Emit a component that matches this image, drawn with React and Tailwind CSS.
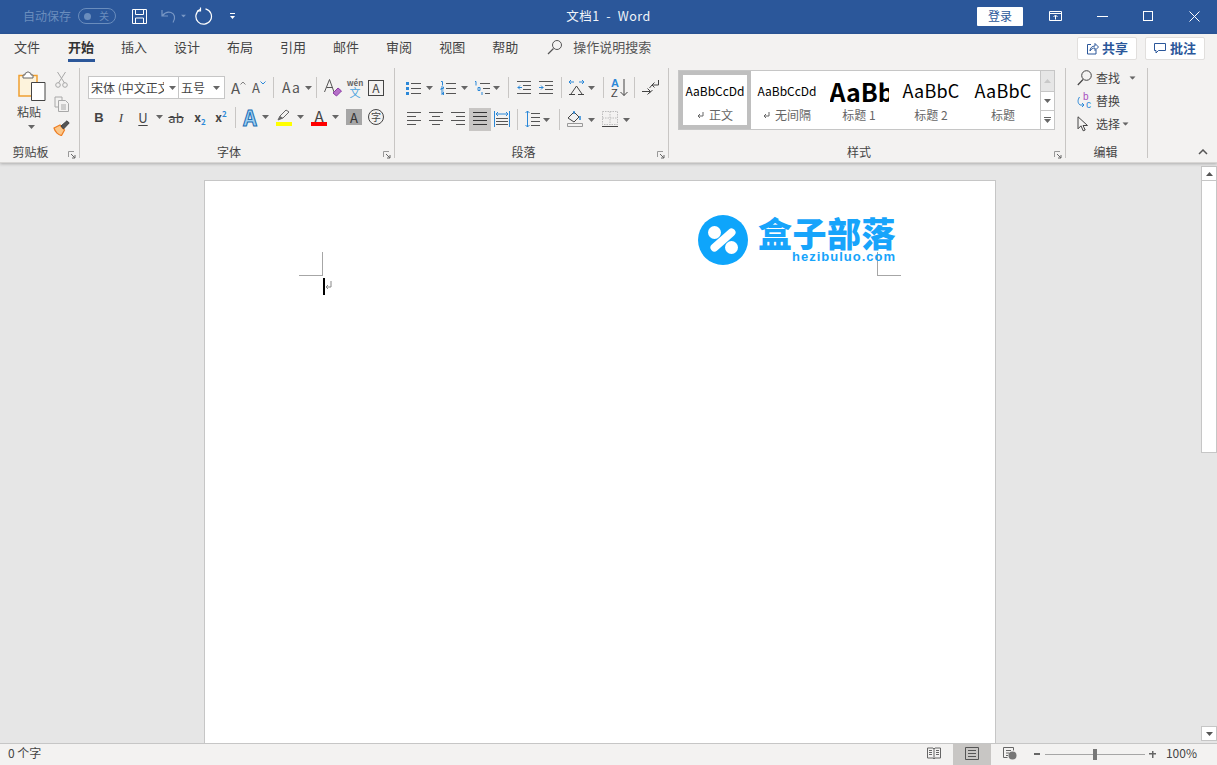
import React from "react";

const BLUE = "#2b88d8";
const DK = "#555";

const Caret = ({ className = "", color = "#666" }) => (
  <svg width="7" height="4" viewBox="0 0 7 4" className={`shrink-0 ${className}`}>
    <path d="M0 0h7L3.5 4z" fill={color} />
  </svg>
);

const VSep = ({ className = "" }) => <div className={`w-px shrink-0 bg-[#c8c6c4] ${className}`} />;

const Launcher = () => (
  <svg width="8" height="8" viewBox="0 0 8 8" className="absolute right-[3px] top-[8px]">
    <path d="M0.5 6V0.5H6" fill="none" stroke="#999" />
    <path d="M3 3l4 4M7 4v3H4" fill="none" stroke="#666" />
  </svg>
);

const Group = ({ label, width, labelPad = "pr-[16px]", children }) => (
  <div className={`${width} h-[90px] shrink-0 flex flex-col border-r border-[#c8c6c4]`}>
    <div className="flex-1 min-h-0">{children}</div>
    <div className={`relative h-[18px] flex items-center justify-center text-[12px] leading-[16px] text-[#444] -mb-[3px] ${labelPad}`}>
      {label}
      {label !== "编辑" && <Launcher />}
    </div>
  </div>
);

const Lines = ({ rows, w = 15, h = 14, color = DK, children, className = "" }) => (
  <svg width={w} height={h} viewBox={`0 0 ${w} ${h}`} className={`shrink-0 ${className}`}>
    {rows.map(([a, b, y], i) => (
      <path key={i} d={`M${a} ${y + 0.5}H${b}`} stroke={color} fill="none" />
    ))}
    {children}
  </svg>
);

const Tab = ({ children, active, className = "" }) => (
  <div className={`relative h-[28px] pb-[2px] flex items-center text-[13px] ${active ? "font-bold text-[#333]" : "text-[#444]"} ${className}`}>
    {children}
    {active && <div className="absolute left-0 right-[-1px] bottom-0 h-[3px] bg-[#2b579a]" />}
  </div>
);

const TitleBar = () => (
  <div className="h-[34px] shrink-0 bg-[#2b579a] grid grid-cols-[1fr_auto_1fr] items-center pb-[2px] text-white">
    <div className="flex items-center pl-[23px]">
      <span className="text-[12px] text-[#6a8dbd]">自动保存</span>
      <div className="ml-[7px] w-[38px] h-[16px] rounded-full border border-[#6a8dbd] flex items-center justify-between pl-[5px] pr-[6px]">
        <div className="w-[7px] h-[7px] rounded-full bg-[#6a8dbd]" />
        <span className="text-[10px] leading-none text-[#6a8dbd]">关</span>
      </div>
      <svg width="17" height="17" viewBox="0 0 17 17" className="ml-[15px]">
        <path d="M1.5 1.5h14v14h-14zM4.5 1.5v5h8v-5M4.5 15.5v-5.5h8v5.5" fill="none" stroke="#fff" />
      </svg>
      <svg width="16" height="16" viewBox="0 0 16 16" className="ml-[13px]">
        <path d="M1 2v6h6M1.500 7.500C4 4.500 7 3.500 10 4.500c3.500 1.200 5 5.500 2 10" fill="none" stroke="#7796c4" strokeWidth="1.2" />
      </svg>
      <Caret color="#7796c4" className="ml-[3px] scale-75" />
      <svg width="18" height="18" viewBox="0 0 18 18" className="ml-[8px]">
        <path d="M5 2.500A7.800 7.800 0 1 0 10.500 1.800" fill="none" stroke="#fff" strokeWidth="1.2" />
        <path d="M5.500 0.500v3.500H2" fill="none" stroke="#fff" strokeWidth="1.2" />
      </svg>
      <svg width="5" height="7" viewBox="0 0 5 7" className="ml-[17px]">
        <path d="M0 0.500h5" stroke="#fff" />
        <path d="M0 3h5L2.500 6z" fill="#fff" />
      </svg>
    </div>
    <div className="text-[12.5px] tracking-[0.5px] text-[#f1f4f9]">文档1&nbsp; -&nbsp; Word</div>
    <div className="flex items-center justify-end">
      <button className="w-[46px] h-[19px] bg-white rounded-[1px] text-[12px] leading-none text-[#2b579a]">登录</button>
      <svg width="13" height="10" viewBox="0 0 13 10" className="ml-[26px]">
        <path d="M.5.500h12v9H.5zM.5 2.500h12M6.500 8.500V4.500M4.500 6l2-2 2 2" fill="none" stroke="#fff" />
      </svg>
      <div className="ml-[35px] w-[11px] h-px bg-white" />
      <div className="ml-[35px] w-[10px] h-[10px] border border-white" />
      <svg width="11" height="11" viewBox="0 0 11 11" className="ml-[36px] mr-[17px]">
        <path d="M.5.500l10 10M10.500.500l-10 10" stroke="#fff" />
      </svg>
    </div>
  </div>
);

const TabRow = () => (
  <div className="h-[28px] shrink-0 flex items-center pl-[14px]">
    <div className="flex items-center gap-[27px]">
      <Tab className="mr-px">文件</Tab>
      <Tab active>开始</Tab>
      <Tab>插入</Tab>
      <Tab>设计</Tab>
      <Tab>布局</Tab>
      <Tab>引用</Tab>
      <Tab>邮件</Tab>
      <Tab>审阅</Tab>
      <Tab>视图</Tab>
      <Tab>帮助</Tab>
    </div>
    <svg width="16" height="16" viewBox="0 0 16 16" className="ml-[29px] -mt-[2px]">
      <circle cx="10" cy="6" r="4.500" fill="none" stroke="#555" />
      <path d="M6.500 9.500L1 15" stroke="#555" strokeWidth="1.200" />
    </svg>
    <span className="ml-[10px] pb-[2px] text-[13px] text-[#555]">操作说明搜索</span>
    <div className="ml-auto mr-[12px] flex gap-[8px] pt-px">
      <button className="w-[60px] h-[23px] pb-px bg-white border border-[#e1dfdd] rounded-[2px] flex items-center justify-center gap-[3px] text-[13px] font-bold text-[#2b579a]">
        <svg width="13" height="13" viewBox="0 0 13 13">
          <path d="M5 2.500H1.500v9.500h8.500V8M4 9c0-3 2-5 5-5V1.500L12.500 5 9 8.500V6C7 6 5 7 4 9z" fill="none" stroke="#2b579a" />
        </svg>
        共享
      </button>
      <button className="w-[60px] h-[23px] pb-px bg-white border border-[#e1dfdd] rounded-[2px] flex items-center justify-center gap-[4px] text-[13px] font-bold text-[#2b579a]">
        <svg width="12" height="12" viewBox="0 0 12 12">
          <path d="M.5 1.500h11v7H4.500L2 11V8.500H.5z" fill="none" stroke="#2b579a" />
        </svg>
        批注
      </button>
    </div>
  </div>
);

const Clipboard = () => (
  <Group label="剪贴板" width="w-[80px]" labelPad="pr-[18px]">
    <div className="flex pl-[16px] pt-[3px]">
      <div className="flex flex-col items-center w-[30px]">
        <svg width="29" height="30" viewBox="0 0 29 30">
          <path d="M2 4.500h18V25H2z" fill="#fdf3dc" stroke="#f0a030" strokeWidth="1.500" />
          <path d="M8 4V2.500L11 .8l3 1.700V4h2v3H6V4z" fill="#fff" stroke="#666" />
          <path d="M14.500 11.500h13.500v18H14.500z" fill="#fff" stroke="#444" />
        </svg>
        <span className="text-[12px] leading-[18px] mt-[2px] pr-[4px] text-[#444]">粘贴</span>
        <Caret className="mt-[4px]" />
      </div>
      <div className="flex flex-col items-center ml-[7px] gap-[8px] w-[17px]">
        <svg width="13" height="17" viewBox="0 0 13 17">
          <path d="M2.500 1l7 11M10.500 1l-7 11" stroke="#a8a8a8" fill="none" />
          <circle cx="3" cy="14" r="2.300" fill="none" stroke="#a8a8a8" />
          <circle cx="10" cy="14" r="2.300" fill="none" stroke="#a8a8a8" />
        </svg>
        <svg width="16" height="16" viewBox="0 0 16 16">
          <path d="M1 1h7v3M1 1v10h3" fill="none" stroke="#a8a8a8" />
          <path d="M4.500 4.500h7l3 3v8h-10z" fill="#f3f2f1" stroke="#a8a8a8" />
          <path d="M7 9h5M7 11h5M7 13h5" stroke="#a8a8a8" />
        </svg>
        <svg width="17" height="16" viewBox="0 0 17 16">
          <path d="M1 8l6-3 4.500 5-3 5.500C5.500 15 2 12 1 8z" fill="#fbc78a" stroke="#ed7d22" strokeWidth="1.200" />
          <path d="M8 6l6-5.200 2.200 2.200L10.500 9z" fill="#555" stroke="#444" />
        </svg>
      </div>
    </div>
  </Group>
);

const Select = ({ text, className, textClass = "flex-1", caretClass }) => (
  <div className={`h-[23px] bg-white border border-[#c6c6c6] flex items-center pl-[2px] text-[12px] text-[#444] overflow-hidden ${className}`}>
    <span className={`whitespace-nowrap overflow-hidden ${textClass}`}>{text}</span>
    <Caret className={caretClass} />
  </div>
);

const GrowA = ({ down, size }) => (
  <div className="flex w-[15px] h-[20px] items-center text-[#555]">
    <span className={`${size} leading-none`}>A</span>
    <svg width="6" height="4" viewBox="0 0 6 4" className="-mt-[9px]">
      <path d={down ? "M.5.500L3 3 5.500.500" : "M.5 3.500L3 1l2.500 2.500"} fill="none" stroke={down ? BLUE : "#777"} />
    </svg>
  </div>
);

const FontGroup = () => (
  <Group label="字体" width="w-[315px]">
    <div className="pl-[8px] pt-[8px] flex items-center h-[31px]">
      <Select text="宋体 (中文正文)" className="w-[91px]" textClass="w-[73px]" caretClass="ml-[5px]" />
      <Select text="五号" className="w-[47px] -ml-px pr-[4px]" />
      <div className="ml-[6px]"><GrowA size="text-[15px]" /></div>
      <div className="ml-[6px]"><GrowA size="text-[13px]" down /></div>
      <VSep className="h-[21px] ml-[6px]" />
      <span className="ml-[8px] w-[20px] text-[14px] tracking-[1px] text-[#555] whitespace-nowrap">Aa</span>
      <Caret className="ml-[3px]" />
      <VSep className="h-[21px] ml-[4px]" />
      <svg width="18" height="19" viewBox="0 0 18 19" className="ml-[7px]">
        <path d="M0.500 14L5.500 1.500 10 14M2.500 9.500h6" fill="none" stroke="#555" />
        <path d="M9 15l5-5 3.500 3-5 5z" fill="#b570c8" stroke="#8b3aa5" />
      </svg>
      <div className="ml-[4px] w-[18px] h-[20px] flex flex-col items-center leading-none">
        <span className="text-[8px] leading-[9px] text-[#666] font-bold">wén</span>
        <span className="text-[11px] leading-[11px] text-[#4aa3de]">文</span>
      </div>
      <div className="ml-[4px] w-[16px] h-[16px] border border-[#444] flex items-center justify-center text-[12px] leading-none text-[#444]">A</div>
    </div>
    <div className="pl-[9px] pt-[8px] flex items-center h-[28px] text-[#444]">
      <span className="w-[20px] text-center text-[13px] font-bold font-['Liberation_Sans'] leading-none">B</span>
      <span className="w-[20px] ml-[2px] text-center text-[13px] italic font-['Liberation_Serif'] leading-none">I</span>
      <span className="w-[20px] ml-[2px] text-center text-[13px] underline underline-offset-2 leading-none">U</span>
      <Caret className="ml-[3px]" />
      <span className="w-[20px] ml-[3px] text-center text-[13px] line-through leading-none">ab</span>
      <span className="w-[20px] ml-[4px] flex items-baseline justify-center text-[12px] font-bold leading-none">x<span className="text-[8px] text-[#2b88d8] translate-y-[3px]">2</span></span>
      <span className="w-[20px] ml-[1px] flex items-baseline justify-center text-[12px] font-bold leading-none">x<span className="text-[8px] text-[#2b88d8] -translate-y-[5px]">2</span></span>
      <VSep className="h-[21px] ml-[4px]" />
      <span className="w-[16px] ml-[6px] text-center text-[21px] font-bold leading-none text-[#9fd0f2] [-webkit-text-stroke:1px_#1b6fb5]">A</span>
      <Caret className="ml-[4px]" />
      <div className="ml-[7px] w-[16px] flex flex-col items-center">
        <svg width="14" height="12" viewBox="0 0 14 12">
          <path d="M1 11l2-4 6-6 3 2-6 6z" fill="#f3f2f1" stroke="#666" />
          <path d="M1 11l2-4 3 2z" fill="#666" />
        </svg>
        <div className="w-[16px] h-[4px] bg-[#ffff00] mt-[1px]" />
      </div>
      <Caret className="ml-[5px]" />
      <div className="ml-[7px] w-[16px] flex flex-col items-center">
        <span className="text-[15px] leading-[13px] text-[#444]">A</span>
        <div className="w-[16px] h-[4px] bg-[#ff0000]" />
      </div>
      <Caret className="ml-[5px]" />
      <div className="ml-[7px] w-[16px] h-[16px] bg-[#a6a6a6] flex items-center justify-center text-[13px] leading-none text-[#333]">A</div>
      <div className="ml-[6px] w-[16px] h-[16px] rounded-full border border-[#444] flex items-center justify-center text-[10px] leading-none text-[#444]">字</div>
    </div>
  </Group>
);

const ParagraphGroup = () => (
  <Group label="段落" width="w-[274px]">
    <div className="pl-[11px] pt-[8px] flex items-center h-[31px]">
      <Lines rows={[[5, 15, 2], [5, 15, 7], [5, 15, 12]]}>
        <path d="M0 1h3v3H0zM0 6h3v3H0zM0 11h3v3H0z" fill={BLUE} />
      </Lines>
      <Caret className="ml-[5px]" />
      <Lines w={16} rows={[[6, 16, 2], [6, 16, 7], [6, 16, 12]]} className="ml-[7px]">
        <path d="M1 0.500h1.500v4M1 6h2.500v1.500H1v1.500h2.500M1 11h2.500v3H1M1.500 12.500h2" stroke={BLUE} fill="none" />
      </Lines>
      <Caret className="ml-[5px]" />
      <Lines w={16} rows={[[6, 16, 2], [9, 16, 7], [11, 16, 12]]} className="ml-[6px]">
        <path d="M1 .500h1v4M4 6.500h2v3H4zM8 11v3" stroke={BLUE} fill="none" />
      </Lines>
      <Caret className="ml-[3px]" />
      <VSep className="h-[21px] ml-[8px]" />
      <Lines rows={[[0, 14, 0], [6, 14, 4], [6, 14, 8], [0, 14, 12]]} h={13} className="ml-[8px]">
        <path d="M5 6.500H.8M3 4.500l-2 2 2 2" stroke={BLUE} fill="none" />
      </Lines>
      <Lines rows={[[0, 14, 0], [6, 14, 4], [6, 14, 8], [0, 14, 12]]} h={13} className="ml-[7px]">
        <path d="M0 6.500h4.200M2 4.500l2 2-2 2" stroke={BLUE} fill="none" />
      </Lines>
      <VSep className="h-[21px] ml-[7px]" />
      <svg width="17" height="17" viewBox="0 0 17 17" className="ml-[6px]">
        <path d="M1 15.500h6M10 15.500h6M3 15L8.500 7 14 15" fill="none" stroke="#444" />
        <path d="M1 3h5M3 1L1 3l2 2M11 3h5M14 1l2 2-2 2" fill="none" stroke={BLUE} />
      </svg>
      <Caret className="ml-[3px]" />
      <VSep className="h-[21px] ml-[8px]" />
      <svg width="17" height="19" viewBox="0 0 17 19" className="ml-[7px]">
        <text x="0" y="9" fontSize="11" fontWeight="700" fill={BLUE} fontFamily="Liberation Sans">A</text>
        <text x="0" y="18.500" fontSize="11" fill="#444" fontFamily="Liberation Sans">Z</text>
        <path d="M13 1v16.500M9.500 14l3.500 3.500 3.500-3.500" fill="none" stroke="#444" />
      </svg>
      <VSep className="h-[21px] ml-[6px]" />
      <svg width="17" height="17" viewBox="0 0 17 17" className="ml-[7px]">
        <path d="M0 12.500h8M5.500 9.500l3 3-3 3M10.500 11l-3.500 3.500" fill="none" stroke="#444" />
        <path d="M16.500 1v5H10M12.500 3.500L10 6l2.500 2.500M7.500 9l2.500-3" fill="none" stroke="#444" />
      </svg>
    </div>
    <div className="pl-[12px] pt-[9px] flex items-center h-[32px]">
      <Lines w={14} rows={[[0, 14, 0], [0, 9, 4], [0, 14, 8], [0, 9, 12]]} h={16} />
      <Lines w={14} rows={[[0, 14, 0], [3, 11, 4], [0, 14, 8], [3, 11, 12]]} h={16} className="ml-[8px]" />
      <Lines w={14} rows={[[0, 14, 0], [5, 14, 4], [0, 14, 8], [5, 14, 12]]} h={16} className="ml-[8px]" />
      <div className="ml-[4px] w-[22px] h-[23px] bg-[#c8c6c4] flex items-center justify-center">
        <Lines w={14} rows={[[0, 14, 0], [0, 14, 4], [0, 14, 8], [0, 14, 12]]} h={16} color="#333" />
      </div>
      <svg width="16" height="16" viewBox="0 0 16 16" className="ml-[3px] -mt-[2px]">
        <path d="M.5 0v16M15.500 0v16" stroke={BLUE} fill="none" />
        <path d="M2 3h12M4 1L2 3l2 2M12 1l2 2-2 2" stroke={BLUE} fill="none" />
        <path d="M2 7.500h12M2 10.500h12M2 13.500h12" stroke={DK} fill="none" />
      </svg>
      <VSep className="h-[21px] ml-[7px]" />
      <svg width="15" height="16" viewBox="0 0 15 16" className="ml-[7px] -mt-[1px]">
        <path d="M2.500 0v16M.5 2l2-2 2 2M.5 14l2 2 2-2" stroke={BLUE} fill="none" />
        <path d="M6 2.500h9M6 6.500h9M6 10.500h9M6 14.500h9" stroke={DK} fill="none" />
      </svg>
      <Caret className="ml-[3px]" />
      <VSep className="h-[21px] ml-[9px]" />
      <svg width="16" height="17" viewBox="0 0 16 17" className="ml-[7px] -mt-[2px]">
        <path d="M1 8l6-6 5 5-5 5z" fill="#f3f2f1" stroke="#444" />
        <path d="M7 1v3M13 6v4" stroke={BLUE} strokeWidth="1.500" />
        <path d="M.5 13.500h15v3H.5z" fill="#f3f2f1" stroke="#999" />
      </svg>
      <Caret className="ml-[5px]" />
      <svg width="16" height="16" viewBox="0 0 16 16" className="ml-[7px] -mt-[2px]">
        <path d="M.5.500h15v13H.5zM8 .500v13M.5 7h15" fill="none" stroke="#bdbdbd" strokeDasharray="1.500 1" />
        <path d="M0 15.500h16" stroke="#444" />
      </svg>
      <Caret className="ml-[5px]" />
    </div>
  </Group>
);

const StyleItem = ({ sample, label, mark, active }) => (
  <div className={`w-[72px] shrink-0 h-full flex flex-col items-center overflow-hidden border-[4px] ${active ? "border-[#bfbfbf]" : "border-white"}`}>
    <div className="h-[31px] w-full flex items-center justify-center overflow-hidden whitespace-nowrap">{sample}</div>
    <div className="text-[12px] leading-[16px] mt-px text-[#666] flex items-center gap-[5px]">
      {mark && (
        <svg width="7" height="7" viewBox="0 0 7 7">
          <path d="M6 0v4H1M3 2L1 4l2 2" fill="none" stroke="#666" />
        </svg>
      )}
      {label}
    </div>
  </div>
);

const StylesGroup = () => (
  <Group label="样式" width="w-[397px]">
    <div className="ml-[9px] mt-[2px] w-[377px] h-[60px] bg-white border border-[#c6c6c6] flex">
      <StyleItem active mark label="正文" sample={<span className="text-[12px] text-black">AaBbCcDd</span>} />
      <StyleItem mark label="无间隔" sample={<span className="text-[12px] text-black">AaBbCcDd</span>} />
      <StyleItem label="标题 1" sample={<span className="w-[59px] overflow-hidden text-[25px] leading-[30px] font-bold text-black">AaBbCc</span>} />
      <StyleItem label="标题 2" sample={<span className="text-[18px] tracking-[0.2px] text-black">AaBbC</span>} />
      <StyleItem label="标题" sample={<span className="text-[18px] tracking-[0.2px] text-black">AaBbC</span>} />
      <div className="ml-auto w-[14px] border-l border-[#c6c6c6] flex flex-col">
        <div className="h-[21px] bg-[#e6e6e6] flex items-center justify-center border-b border-[#c6c6c6]">
          <Caret color="#c8c8c8" className="rotate-180" />
        </div>
        <div className="h-[19px] flex items-center justify-center border-b border-[#c6c6c6]">
          <Caret />
        </div>
        <div className="flex-1 flex flex-col items-center justify-center gap-px">
          <div className="w-[7px] h-px bg-[#666]" />
          <Caret />
        </div>
      </div>
    </div>
  </Group>
);

const EditRow = ({ icon, label, caret }) => (
  <div className="h-[23px] flex items-center text-[12px] text-[#444]">
    <div className="w-[19px] flex items-center">{icon}</div>
    <span>{label}</span>
    {caret}
  </div>
);

const EditGroup = () => (
  <Group label="编辑" width="w-[82px]" labelPad="pr-[2px]">
    <div className="pl-[11px] -mt-[2px]">
      <EditRow
        label="查找"
        caret={<Caret className="ml-[9px] scale-90" />}
        icon={
          <svg width="15" height="16" viewBox="0 0 15 16">
            <circle cx="9.500" cy="5.500" r="4.800" fill="none" stroke="#444" />
            <path d="M6 9.500L.8 15" stroke="#444" strokeWidth="1.200" />
          </svg>
        }
      />
      <EditRow
        label="替换"
        icon={
          <svg width="15" height="17" viewBox="0 0 15 17">
            <text x="6" y="8" fontSize="10" fill="#a84fc0" fontFamily="Liberation Sans">b</text>
            <text x="9" y="16" fontSize="10" fill={BLUE} fontFamily="Liberation Sans">c</text>
            <path d="M2.500 5C.5 8 .5 11 3 13h4M5 11l2 2-2 2" fill="none" stroke={BLUE} />
          </svg>
        }
      />
      <EditRow
        label="选择"
        caret={<Caret className="ml-[2px] scale-90" />}
        icon={
          <svg width="12" height="16" viewBox="0 0 12 16">
            <path d="M1 .8v12l3-3 2.200 5 2-.8L6 9.500h4.500z" fill="#f3f2f1" stroke="#444" />
          </svg>
        }
      />
    </div>
  </Group>
);

const Ribbon = () => (
  <div className="relative z-10 shrink-0 bg-[#f3f2f1] shadow-[0_1px_3px_rgba(0,0,0,0.25)] border-b border-[#d8d6d4]">
    <TabRow />
    <div className="h-[100px] pt-[6px] flex">
      <Clipboard />
      <FontGroup />
      <ParagraphGroup />
      <StylesGroup />
      <EditGroup />
      <div className="flex-1 flex items-end justify-end pr-[9px] pb-[7px]">
        <svg width="10" height="6" viewBox="0 0 10 6">
          <path d="M1 5l4-4 4 4" fill="none" stroke="#555" strokeWidth="1.500" />
        </svg>
      </div>
    </div>
  </div>
);

const Logo = () => (
  <div className="absolute left-[493px] top-[34px] flex items-start">
    <svg width="50" height="50" viewBox="0 0 50 50">
      <circle cx="25" cy="25" r="25" fill="#0ea5fb" />
      <circle cx="16.500" cy="17.500" r="6.500" fill="#fff" />
      <circle cx="33.500" cy="32.500" r="6.500" fill="#fff" />
      <path d="M33.500 17.500L16.500 32.500" stroke="#fff" strokeWidth="8" strokeLinecap="round" />
    </svg>
    <div className="ml-[9px] w-[139px] flex flex-col items-end">
      <div className="text-[34px] leading-[35px] font-black tracking-[0.5px] whitespace-nowrap text-[#17a4fb] font-['Noto_Sans_CJK_SC',sans-serif]">盒子部落</div>
      <div className="text-[13px] leading-[13px] font-bold tracking-[1px] text-[#17a4fb] font-['Liberation_Sans',sans-serif]">hezibuluo.com</div>
    </div>
  </div>
);

const Page = () => (
  <div className="relative ml-[204px] mt-[17px] w-[792px] flex-1 bg-white border border-b-0 border-[#c6c6c6]">
    <div className="pt-[71px] px-[94px] flex justify-between">
      <div className="w-[24px] h-[24px] border-r border-b border-[#a6a6a6]" />
      <div className="w-[24px] h-[24px] border-l border-b border-[#a6a6a6]" />
    </div>
    <div className="ml-[118px] mt-[2px] flex items-start">
      <div className="w-[2px] h-[17px] bg-black" />
      <svg width="7" height="9" viewBox="0 0 7 9" className="mt-[3px]">
        <path d="M6 0v6H1M3 4L1 6l2 2" fill="none" stroke="#888" />
      </svg>
    </div>
    <Logo />
  </div>
);

const Scrollbar = () => (
  <div className="w-[16px] shrink-0 flex flex-col pt-[3px] pb-[2px] bg-[#e6e6e6]">
    <div className="h-[15px] bg-white border border-[#c6c6c6] flex items-center justify-center">
      <Caret color="#555" className="rotate-180" />
    </div>
    <div className="h-[272px] bg-white border border-t-0 border-[#c6c6c6]" />
    <div className="flex-1" />
    <div className="h-[15px] bg-white border border-[#c6c6c6] flex items-center justify-center">
      <Caret color="#555" />
    </div>
  </div>
);

const StatusBar = () => (
  <div className="h-[22px] shrink-0 bg-[#f3f2f1] border-t border-[#c6c6c6] flex items-center pl-[8px] text-[12px] text-[#444]">
    <span className="-mt-[3px]">0 个字</span>
    <div className="ml-auto flex items-center h-full">
      <svg width="14" height="13" viewBox="0 0 14 13" className="-mt-[2px]">
        <path d="M.5 1h5.500l1 1 1-1h5.500v10H8l-1 1-1-1H.5zM7 2v10M2 3.500h3M2 5.500h3M2 7.500h3M9 3.500h3M9 5.500h3M9 7.500h3" fill="none" stroke="#666" />
      </svg>
      <div className="ml-[12px] w-[38px] h-full bg-[#c8c6c4] flex items-center justify-center">
        <svg width="14" height="13" viewBox="0 0 14 13" className="-mt-[2px]">
          <path d="M.5.500h13v12H.5zM3 3.500h8M3 6.500h8M3 9.500h8" fill="none" stroke="#555" />
        </svg>
      </div>
      <svg width="14" height="13" viewBox="0 0 14 13" className="ml-[12px] -mt-[2px]">
        <path d="M.5.500h10v3M.5.500v10h4M3 3.500h5M3 6h3M3 8.500h2" fill="none" stroke="#666" />
        <circle cx="9.500" cy="8.500" r="4" fill="#777" />
      </svg>
      <div className="ml-[17px] w-[6px] h-[2px] -mt-[1px] bg-[#666]" />
      <div className="relative ml-[5px] w-[100px] h-px -mt-[1px] bg-[#a6a6a6]">
        <div className="absolute left-[48px] -top-[5px] w-[4px] h-[11px] bg-[#777]" />
      </div>
      <div className="ml-[4px] w-[7px] h-[7px] -mt-[1px] bg-[linear-gradient(#666,#666),linear-gradient(#666,#666)] bg-no-repeat bg-[length:100%_1.5px,1.5px_100%] bg-center" />
      <span className="ml-[10px] mr-[20px] -mt-[3px] text-[#444]">100%</span>
    </div>
  </div>
);

export default function App() {
  return (
    <div className="w-full h-screen flex flex-col overflow-hidden font-['Noto_Sans_CJK_SC','Noto_Sans',sans-serif] bg-[#e6e6e6]">
      <TitleBar />
      <Ribbon />
      <div className="flex-1 min-h-0 flex">
        <div className="flex-1 min-w-0 flex flex-col overflow-hidden">
          <Page />
        </div>
        <Scrollbar />
      </div>
      <StatusBar />
    </div>
  );
}
